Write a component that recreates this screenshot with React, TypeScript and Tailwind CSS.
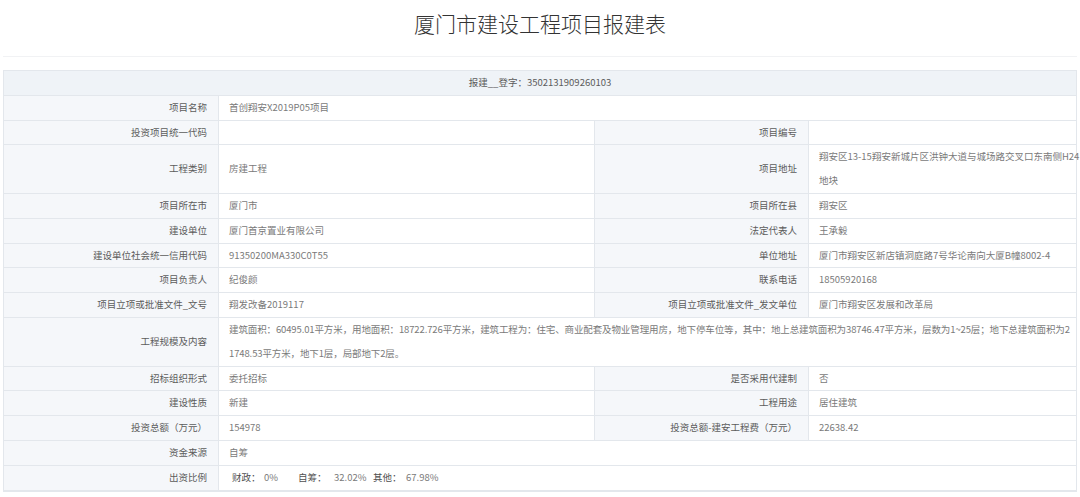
import React from 'react';

type Row =
  | { kind: 'pair'; l1: string; v1: React.ReactNode; l2: string; v2: React.ReactNode }
  | { kind: 'full'; l1: string; v1: React.ReactNode };

const ROWS: Row[] = [
  { kind: 'full', l1: '项目名称', v1: '首创翔安X2019P05项目' },
  { kind: 'pair', l1: '投资项目统一代码', v1: '', l2: '项目编号', v2: '' },
  {
    kind: 'pair',
    l1: '工程类别',
    v1: '房建工程',
    l2: '项目地址',
    v2: (
      <>
        翔安区13-15翔安新城片区洪钟大道与城场路交叉口东南侧H24
        <br />
        地块
      </>
    ),
  },
  { kind: 'pair', l1: '项目所在市', v1: '厦门市', l2: '项目所在县', v2: '翔安区' },
  { kind: 'pair', l1: '建设单位', v1: '厦门首京置业有限公司', l2: '法定代表人', v2: '王承毅' },
  {
    kind: 'pair',
    l1: '建设单位社会统一信用代码',
    v1: '91350200MA330C0T55',
    l2: '单位地址',
    v2: '厦门市翔安区新店镇洞庭路7号华论南向大厦B幢8002-4',
  },
  { kind: 'pair', l1: '项目负责人', v1: '纪俊颜', l2: '联系电话', v2: '18505920168' },
  {
    kind: 'pair',
    l1: '项目立项或批准文件_文号',
    v1: '翔发改备2019117',
    l2: '项目立项或批准文件_发文单位',
    v2: '厦门市翔安区发展和改革局',
  },
  {
    kind: 'full',
    l1: '工程规模及内容',
    v1: (
      <span className="tracking-[-0.12px]">
        建筑面积：60495.01平方米，用地面积：18722.726平方米，建筑工程为：住宅、商业配套及物业管理用房，地下停车位等，其中：地上总建筑面积为38746.47平方米，层数为1~25层；地下总建筑面积为2
        <br />
        1748.53平方米，地下1层，局部地下2层。
      </span>
    ),
  },
  { kind: 'pair', l1: '招标组织形式', v1: '委托招标', l2: '是否采用代建制', v2: '否' },
  { kind: 'pair', l1: '建设性质', v1: '新建', l2: '工程用途', v2: '居住建筑' },
  {
    kind: 'pair',
    l1: '投资总额（万元）',
    v1: '154978',
    l2: '投资总额-建安工程费（万元）',
    v2: '22638.42',
  },
  { kind: 'full', l1: '资金来源', v1: '自筹' },
  {
    kind: 'full',
    l1: '出资比例',
    v1: (
      <span className="pl-[3px]">
        <span className="inline-block w-[32px] text-[#505050]">财政：</span>
        <span className="inline-block w-[34px]">0%</span>
        <span className="inline-block w-[36px] text-[#505050]">自筹：</span>
        <span className="inline-block w-[39px]">32.02%</span>
        <span className="inline-block w-[33px] text-[#505050]">其他：</span>
        <span>67.98%</span>
      </span>
    ),
  },
  { kind: 'full', l1: '', v1: '' },
];

const labelCls =
  'border border-[#e3e7ec] bg-[#f5f7fa] text-right pr-[11px] pl-2 py-0 align-middle text-[#5c5c5c] whitespace-nowrap';
const valueCls =
  'border border-[#e3e7ec] bg-white text-left pl-[10px] pr-0 py-0 align-middle text-[#7a7a7a] whitespace-nowrap';

export default function App() {
  return (
    <div className="w-[1080px] h-[497px] overflow-hidden bg-white font-['Noto_Sans_CJK_SC','Noto_Sans',sans-serif]">
      {/* title */}
      <div className="mx-[3px] h-[57px] border-b border-[#f1f2f4] pt-[9px] text-center">
        <h1 className="text-[21px] leading-[28px] text-[#333] font-light">厦门市建设工程项目报建表</h1>
      </div>

      <div className="px-[3px] pt-[13px]">
        <table className="w-[1073px] table-fixed border-collapse text-[9.5px] leading-[23.8px]">
          <colgroup>
            <col className="w-[215px]" />
            <col className="w-[376px]" />
            <col className="w-[214px]" />
            <col className="w-[268px]" />
          </colgroup>
          <tbody>
            <tr>
              <td colSpan={4} className="border border-[#e3e7ec] bg-[#eff3f7] text-center py-0 text-[#5c5c5c]">
                报建__登字：3502131909260103
              </td>
            </tr>
            {ROWS.map((r, i) =>
              r.kind === 'pair' ? (
                <tr key={i}>
                  <td className={labelCls}>{r.l1}</td>
                  <td className={valueCls}>{r.v1}</td>
                  <td className={labelCls}>{r.l2}</td>
                  <td className={valueCls}>{r.v2}</td>
                </tr>
              ) : (
                <tr key={i}>
                  <td className={labelCls}>{r.l1}</td>
                  <td colSpan={3} className={valueCls}>
                    {r.v1}
                  </td>
                </tr>
              )
            )}
          </tbody>
        </table>
      </div>
    </div>
  );
}
